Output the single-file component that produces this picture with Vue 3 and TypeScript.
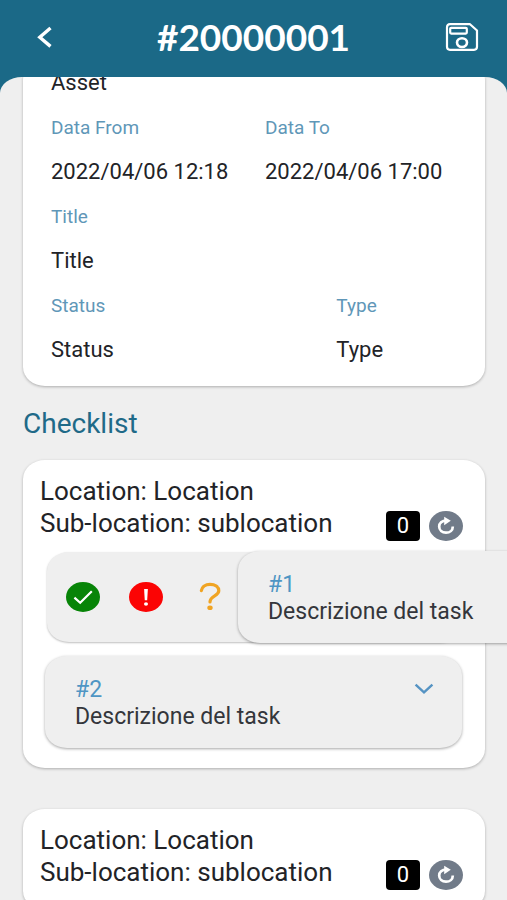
<script setup lang="ts">
import { ref } from 'vue'

interface Field {
  label: string
  value: string
}

interface Task {
  id: number
  description: string
  swiped: boolean
}

interface Section {
  location: string
  sublocation: string
  count: number
  tasks: Task[]
}

const code = '#20000001'

const rows: { layout: string; fields: Field[] }[] = [
  {
    layout: 'halves',
    fields: [
      { label: 'Data From', value: '2022/04/06 12:18' },
      { label: 'Data To', value: '2022/04/06 17:00' },
    ],
  },
  { layout: 'full', fields: [{ label: 'Title', value: 'Title' }] },
  {
    layout: 'thirds',
    fields: [
      { label: 'Status', value: 'Status' },
      { label: 'Type', value: 'Type' },
    ],
  },
]

const sections = ref<Section[]>([
  {
    location: 'Location',
    sublocation: 'sublocation',
    count: 0,
    tasks: [
      { id: 1, description: 'Descrizione del task', swiped: true },
      { id: 2, description: 'Descrizione del task', swiped: false },
    ],
  },
  { location: 'Location', sublocation: 'sublocation', count: 0, tasks: [] },
])

function reset(section: Section): void {
  section.count = 0
}

function close(task: Task): void {
  task.swiped = false
}
</script>

<template>
  <div class="screen">
    <header class="topbar">
      <button class="icon-button" type="button" aria-label="Back">
        <svg width="34" height="34" viewBox="0 0 34 34" fill="none" stroke="currentColor" stroke-width="3.4">
          <path d="M22.5 8 11.8 17.2 22.5 26.4" />
        </svg>
      </button>
      <h1 class="code">{{ code }}</h1>
      <button class="icon-button" type="button" aria-label="Save">
        <svg width="34" height="30" viewBox="0 0 34 30" fill="none" stroke="currentColor" stroke-width="2.2" stroke-linejoin="round">
          <path d="M5 2.2H25L32 8.5V24.8Q32 27.8 29 27.8H5Q2 27.8 2 24.8V5.2Q2 2.2 5 2.2Z" />
          <rect x="5.2" y="5.8" width="16.6" height="5.8" rx="1" />
          <ellipse cx="17" cy="20.6" rx="5" ry="4.4" stroke-width="2.6" />
        </svg>
      </button>
    </header>

    <main class="sheet">
      <section class="card details">
        <p class="value">Asset</p>
        <div v-for="(row, i) in rows" :key="i" class="row" :class="row.layout">
          <dl v-for="field in row.fields" :key="field.label" class="field">
            <dt class="label">{{ field.label }}</dt>
            <dd class="value">{{ field.value }}</dd>
          </dl>
        </div>
      </section>

      <h2 class="heading">Checklist</h2>

      <section v-for="(section, i) in sections" :key="i" class="card checklist">
        <div class="place">
          <div class="place-text">
            <p>Location: {{ section.location }}</p>
            <p>Sub-location: {{ section.sublocation }}</p>
          </div>
          <span class="count">{{ section.count }}</span>
          <button class="reset" type="button" aria-label="Reset" @click="reset(section)">
            <svg width="34" height="30" viewBox="0 0 34 30">
              <ellipse cx="17" cy="15" rx="17" ry="15" fill="#717b89" />
              <path d="M17.5 9.6C12.8 9.6 10.2 12.2 10.2 15.6C10.2 19.2 13.2 21.7 17 21.7C20.8 21.7 23.8 19.2 23.8 15.4" fill="none" stroke="#fff" stroke-width="2.7" />
              <path d="M15.2 5.8 21.8 9.8 15.2 14.2" fill="#fff" />
            </svg>
          </button>
        </div>

        <ul v-if="section.tasks.length" class="tasks">
          <li v-for="task in section.tasks" :key="task.id" class="slot">
            <div v-if="task.swiped" class="actions">
              <button type="button" aria-label="Done" @click="close(task)">
                <svg width="34" height="30" viewBox="0 0 34 30">
                  <ellipse cx="17" cy="15" rx="17" ry="15" fill="#078407" />
                  <path d="M8.4 15.6 14.2 20.8 25.8 9.2" fill="none" stroke="#fff" stroke-width="2.2" />
                </svg>
              </button>
              <button type="button" aria-label="Problem" @click="close(task)">
                <svg width="34" height="30" viewBox="0 0 34 30">
                  <ellipse cx="17" cy="15" rx="17" ry="15" fill="#fb0404" />
                  <path d="M15.1 7H18.9L18.2 18.2H15.8Z" fill="#fff" />
                  <ellipse cx="17" cy="22" rx="2" ry="1.7" fill="#fff" />
                </svg>
              </button>
              <button type="button" aria-label="Unknown" @click="close(task)">
                <svg width="34" height="30" viewBox="0 0 34 30">
                  <path d="M9.4 8.6C10 4.6 13.6 2.4 18 2.4C23 2.4 26.8 4.8 26.8 8.8C26.8 14.2 18 13.6 18 20" fill="none" stroke="#f0a423" stroke-width="3.2" stroke-linecap="round" />
                  <ellipse cx="18" cy="25.8" rx="2.7" ry="2.3" fill="#f0a423" />
                </svg>
              </button>
            </div>
            <article class="task" :class="{ swiped: task.swiped }">
              <div>
                <h3 class="number">#{{ task.id }}</h3>
                <p class="description">{{ task.description }}</p>
              </div>
              <button v-if="!task.swiped" class="expand" type="button" aria-label="Expand">
                <svg width="20" height="14" viewBox="0 0 20 14" fill="none" stroke="#5593c3" stroke-width="2.4">
                  <path d="M1.6 2.6 10 10.4 18.4 2.6" />
                </svg>
              </button>
            </article>
          </li>
        </ul>
      </section>
    </main>
  </div>
</template>

<style>
body {
  margin: 0;
}
</style>

<style scoped>
.screen {
  display: flex;
  flex-direction: column;
  height: 100vh;
  overflow: hidden;
  background: #1b6987;
  color: #222327;
  font-family: Roboto, "Liberation Sans", sans-serif;
}

h1,
h2,
h3,
p,
dl,
dd,
ul {
  margin: 0;
  padding: 0;
  font-weight: 400;
}

button {
  display: flex;
  padding: 0;
  border: 0;
  background: none;
  color: inherit;
  cursor: pointer;
}

svg {
  display: block;
}

.topbar {
  display: flex;
  align-items: center;
  justify-content: space-between;
  flex: none;
  height: 77px;
  padding: 0 28px 3px;
  box-sizing: border-box;
  color: #fff;
}

.code {
  font-family: Lato, Roboto, sans-serif;
  font-size: 37px;
  font-weight: 700;
  line-height: 44px;
}

.sheet {
  flex: 1;
  min-height: 0;
  overflow-x: hidden;
  overflow-y: auto;
  scrollbar-width: none;
  padding: 0 22px 0 23px;
  border-radius: 22px 22px 0 0 / 16px 16px 0 0;
  background: #efefef;
}

.card {
  border-radius: 22px / 19px;
  background: #fff;
  box-shadow: 0 1px 3px rgba(0, 0, 0, 0.28);
}

/* The first line of the details sits half under the top bar. */
.details {
  display: flex;
  flex-direction: column;
  gap: 1px;
  margin-top: -16px;
  padding: 0 6px 14px 28px;
}

.row {
  display: grid;
}

.halves {
  grid-template-columns: 1fr 1fr;
}

.thirds {
  grid-template-columns: 2fr 1fr;
}

.label,
.value {
  line-height: 44px;
  white-space: nowrap;
}

.label {
  color: #5f97b8;
  font-size: 19px;
}

.value {
  font-size: 22px;
}

.heading {
  margin: 20px 0 18px;
  color: #1f6a88;
  font-size: 28px;
  line-height: 36px;
}

.checklist {
  margin-bottom: 41px;
  padding: 15px 22px 20px 17px;
}

.place {
  display: flex;
  align-items: flex-end;
  gap: 9px;
}

.place-text {
  flex: 1;
  padding-bottom: 2px;
  font-size: 26px;
  line-height: 32px;
  white-space: nowrap;
}

.count {
  width: 34px;
  border-radius: 4px;
  background: #000;
  color: #fff;
  font-size: 22px;
  line-height: 30px;
  text-align: center;
}

.tasks {
  display: flex;
  flex-direction: column;
  gap: 13px;
  margin: 10px 1px 0 5px;
  list-style: none;
}

.slot {
  position: relative;
}

.actions {
  position: absolute;
  inset: 1px 0 1px 2px;
  display: flex;
  align-items: center;
  gap: 29px;
  padding-left: 19px;
  border-radius: 22px / 19px;
  background: #efefef;
  box-shadow: 0 1px 2px rgba(0, 0, 0, 0.25);
}

.task {
  display: flex;
  align-items: flex-start;
  justify-content: space-between;
  padding: 20px 28px 18px 30px;
  border-radius: 22px / 19px;
  background: #efefef;
  box-shadow: 0 1px 3px rgba(0, 0, 0, 0.35);
}

.swiped {
  position: relative;
  left: 193px;
}

.number,
.description {
  font-size: 23px;
  line-height: 27px;
}

.number {
  color: #4f96c4;
}

.description {
  color: #34363b;
}

.expand {
  padding: 6px 0;
}
</style>
